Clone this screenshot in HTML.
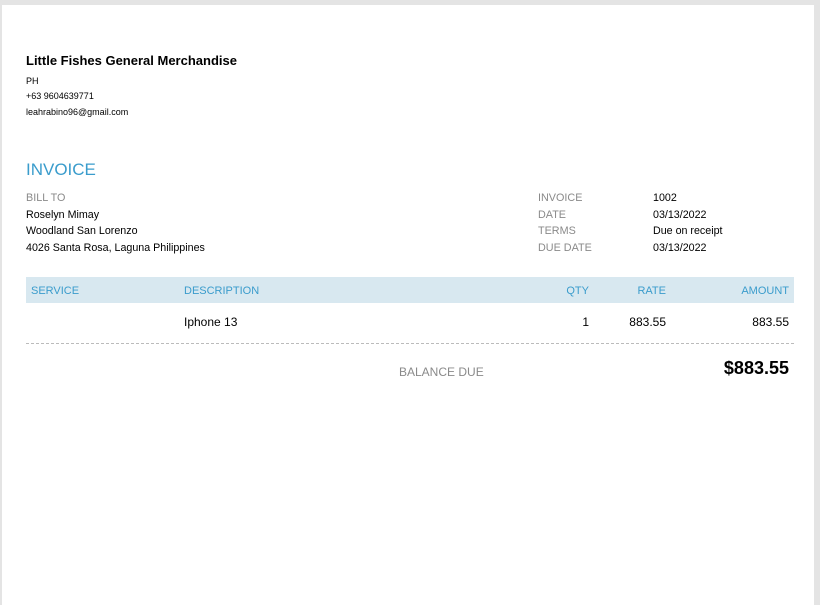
<!DOCTYPE html>
<html><head><style>
html,body{margin:0;padding:0;width:820px;height:603px;overflow:hidden;background:#e4e4e4;font-family:"Liberation Sans",Arial,sans-serif;}
.page{position:absolute;left:2px;top:5px;width:812px;height:600px;background:#fff;}
.a{position:absolute;white-space:nowrap;}
.g{color:#8a8a8a;font-size:10.8px;}
.k{color:#000;font-size:10.7px;}
.h{color:#3a9ccc;font-size:11px;}
</style></head><body>
<div class="page"></div>
<div class="a" style="left:26px;top:53px;font-size:13px;font-weight:bold;">Little Fishes General Merchandise</div>
<div class="a" style="left:26px;top:76px;font-size:9px;">PH</div>
<div class="a" style="left:26px;top:91px;font-size:9px;">+63 9604639771</div>
<div class="a" style="left:26px;top:107px;font-size:9px;">leahrabino96@gmail.com</div>
<div class="a" style="left:26px;top:160px;font-size:17px;color:#3a9ccc;">INVOICE</div>
<div class="a g" style="left:26px;top:192px;">BILL TO</div>
<div class="a k" style="left:26px;top:209px;">Roselyn Mimay</div>
<div class="a k" style="left:26px;top:225px;">Woodland San Lorenzo</div>
<div class="a k" style="left:26px;top:242px;">4026 Santa Rosa, Laguna Philippines</div>
<div class="a g" style="left:538px;top:192px;">INVOICE</div>
<div class="a g" style="left:538px;top:209px;">DATE</div>
<div class="a g" style="left:538px;top:225px;">TERMS</div>
<div class="a g" style="left:538px;top:242px;">DUE DATE</div>
<div class="a k" style="left:653px;top:192px;">1002</div>
<div class="a k" style="left:653px;top:209px;">03/13/2022</div>
<div class="a k" style="left:653px;top:225px;">Due on receipt</div>
<div class="a k" style="left:653px;top:242px;">03/13/2022</div>
<div class="a" style="left:26px;top:277px;width:768px;height:26px;background:#d8e8f0;"></div>
<div class="a h" style="left:31px;top:285px;">SERVICE</div>
<div class="a h" style="left:184px;top:285px;">DESCRIPTION</div>
<div class="a h" style="right:231px;top:285px;">QTY</div>
<div class="a h" style="right:154px;top:285px;">RATE</div>
<div class="a h" style="right:31px;top:285px;">AMOUNT</div>
<div class="a" style="left:184px;top:315px;font-size:12px;">Iphone 13</div>
<div class="a" style="right:231px;top:315px;font-size:12px;">1</div>
<div class="a" style="right:154px;top:315px;font-size:12px;">883.55</div>
<div class="a" style="right:31px;top:315px;font-size:12px;">883.55</div>
<div class="a" style="left:26px;top:343px;width:768px;border-top:1px dashed #bbb;"></div>
<div class="a" style="left:399px;top:365px;font-size:12px;color:#8a8a8a;">BALANCE DUE</div>
<div class="a" style="right:31px;top:358px;font-size:18px;font-weight:bold;">$883.55</div>
</body></html>
